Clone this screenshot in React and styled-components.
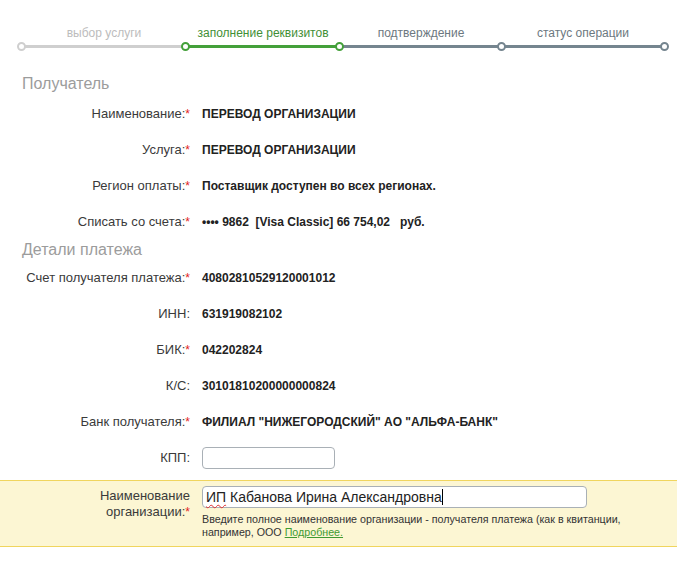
import styled, { createGlobalStyle } from "styled-components";

const GlobalStyle = createGlobalStyle`
    body {
        margin: 0;
        background: #fff;
        font-family: "Liberation Sans", Arial, sans-serif;
        color: #333;
    }
`

const steps = [
    { label: "выбор услуги", width: 164, text: "#bcbcbc", bar: "#cfcfcf", dot: "#cfcfcf" },
    { label: "заполнение реквизитов", width: 154, text: "#3f8f36", bar: "#44a03a", dot: "#44a03a" },
    { label: "подтверждение", width: 162, text: "#6c7880", bar: "#75858f", dot: "#44a03a" },
    { label: "статус операции", width: 162, text: "#6c7880", bar: "#75858f", dot: "#75858f", last: true },
];

const recipient = [
    { label: "Наименование:", value: "ПЕРЕВОД ОРГАНИЗАЦИИ", required: true },
    { label: "Услуга:", value: "ПЕРЕВОД ОРГАНИЗАЦИИ", required: true },
    { label: "Регион оплаты:", value: "Поставщик доступен во всех регионах.", required: true },
    { label: "Списать со счета:", value: "•••• 9862\u00a0\u00a0[Visa Classic] 66 754,02\u00a0\u00a0\u00a0руб.", required: true },
];

const details = [
    { label: "Счет получателя платежа:", value: "40802810529120001012", required: true },
    { label: "ИНН:", value: "631919082102" },
    { label: "БИК:", value: "042202824", required: true },
    { label: "К/С:", value: "30101810200000000824" },
    { label: "Банк получателя:", value: "ФИЛИАЛ \"НИЖЕГОРОДСКИЙ\" АО \"АЛЬФА-БАНК\"", required: true },
];

const Label = ({ text, required }) => (
    <LabelCell>
        {text}
        {required && <Star>*</Star>}
    </LabelCell>
);

const App = () => {
    return (
        <Page>
            <GlobalStyle />
            <Stepper>
                {steps.map((s) => (
                    <Step key={s.label} $width={s.width}>
                        <StepLabel $color={s.text}>{s.label}</StepLabel>
                        <Bar $color={s.bar}>
                            <Dot $color={s.dot} />
                            {s.last && <Dot $color={s.dot} $end />}
                        </Bar>
                    </Step>
                ))}
            </Stepper>

            <Heading $after={2}>Получатель</Heading>
            {recipient.map((r) => (
                <Row key={r.label}>
                    <Label text={r.label} required={r.required} />
                    <Value>{r.value}</Value>
                </Row>
            ))}

            <Heading>Детали платежа</Heading>
            {details.map((r) => (
                <Row key={r.label}>
                    <Label text={r.label} required={r.required} />
                    <Value>{r.value}</Value>
                </Row>
            ))}
            <Row>
                <Label text="КПП:" />
                <div>
                    <TextBox $width={133} />
                </div>
            </Row>

            <Highlight>
                <Label text={<>Наименование<br />организации:</>} required />
                <div>
                    <TextBox $width={385}>
                        <Misspelled>ИП</Misspelled> Кабанова Ирина Александровна
                        <Caret />
                    </TextBox>
                    <Hint>
                        <HintLine>Введите полное наименование организации - получателя платежа (как в квитанции,</HintLine>
                        <HintLine>например, ООО <HintLink href="#">Подробнее.</HintLink></HintLine>
                    </Hint>
                </div>
            </Highlight>
        </Page>
    )
};

const Page = styled.div`
    width: 677px;
    min-height: 566px;
`

const Stepper = styled.div`
    display: flex;
    padding: 26px 0 0 22px;
    height: 74px;
    box-sizing: border-box;
`

const Step = styled.div`
    display: flex;
    flex-direction: column;
    width: ${({ $width }) => $width}px;
`

const StepLabel = styled.span`
    font-size: 12px;
    line-height: 14px;
    text-align: center;
    color: ${({ $color }) => $color};
`

const Bar = styled.div`
    position: relative;
    height: 3px;
    margin-top: 5px;
    background: ${({ $color }) => $color};
`

const Dot = styled.span`
    position: absolute;
    top: -3px;
    ${({ $end }) => ($end ? "right: -5px;" : "left: -5px;")}
    width: 9px;
    height: 9px;
    box-sizing: border-box;
    border-radius: 50%;
    border: 2px solid ${({ $color }) => $color};
    background: #fff;
`

const Heading = styled.h2`
    margin: 0 0 ${({ $after = 0 }) => $after}px;
    padding-left: 22px;
    font-size: 16px;
    font-weight: 400;
    line-height: 20px;
    color: #9c9c9c;
`

const Row = styled.div`
    display: grid;
    grid-template-columns: 190px 1fr;
    column-gap: 12px;
    align-items: center;
    height: 36px;
`

const LabelCell = styled.div`
    text-align: right;
    font-size: 13px;
    line-height: 16px;
    color: #3a3a3a;
`

const Star = styled.span`
    color: #e2231a;
    font-size: 12px;
    vertical-align: top;
`

const Value = styled.div`
    font-size: 12px;
    font-weight: 700;
    color: #222;
`

const TextBox = styled.div`
    display: flex;
    align-items: center;
    width: ${({ $width }) => $width}px;
    height: 22px;
    box-sizing: border-box;
    padding: 0 3px;
    border: 1px solid #a9b0b6;
    border-radius: 4px;
    background: #fff;
    font-size: 14px;
    color: #222;
    white-space: pre;
`

const Misspelled = styled.span`
    text-decoration: underline wavy #e03030;
    text-decoration-thickness: 1px;
    text-underline-offset: 2px;
`

const Caret = styled.span`
    display: inline-block;
    width: 1px;
    height: 16px;
    background: #000;
`

const Highlight = styled.div`
    display: grid;
    grid-template-columns: 190px 1fr;
    column-gap: 12px;
    align-items: start;
    margin-top: 4px;
    padding: 5px 0 7px;
    background: #fcf6d3;
    border-top: 1px solid #f0d55e;
    border-bottom: 1px solid #f0d55e;

    ${LabelCell} {
        padding-top: 2px;
    }
`

const Hint = styled.div`
    margin-top: 5px;
    font-size: 10.7px;
    line-height: 13px;
    color: #333;
`

const HintLine = styled.div`
    white-space: nowrap;
`

const HintLink = styled.a`
    color: #3f9a32;
    text-decoration: underline;
`

export default App;
